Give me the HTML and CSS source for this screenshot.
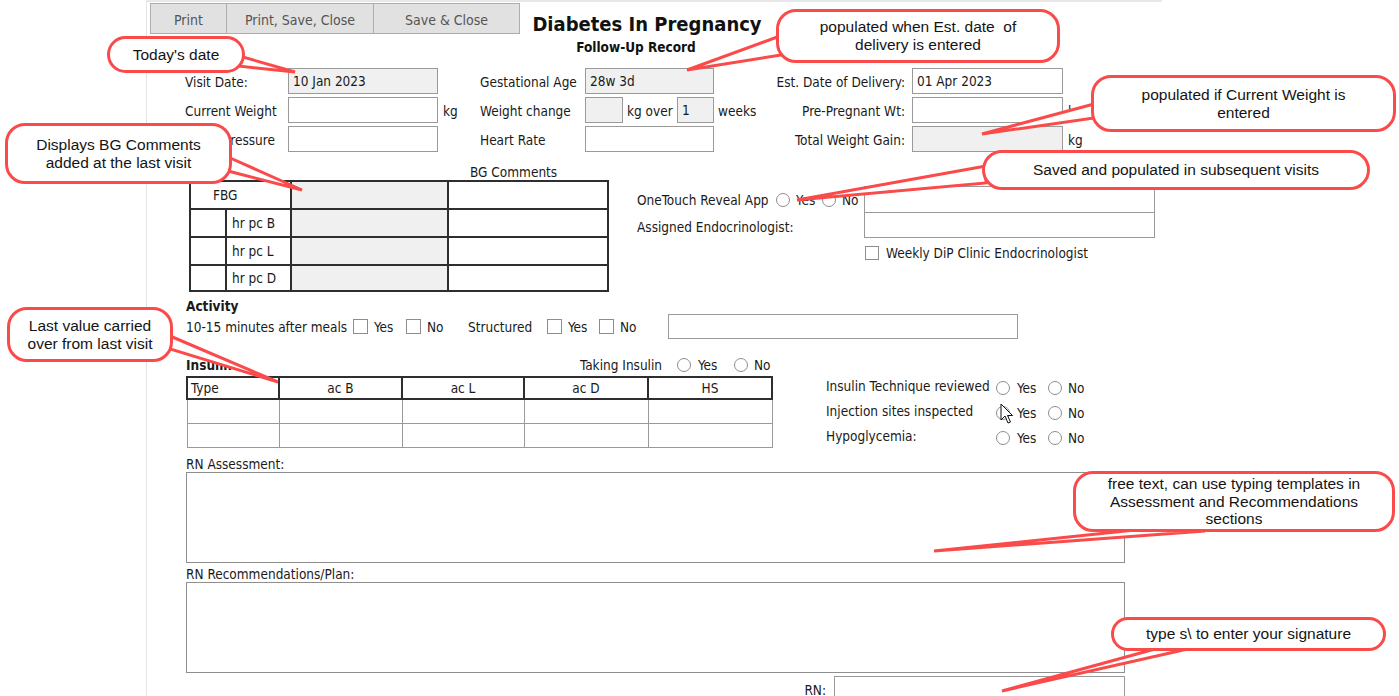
FILE: index.html
```html
<!DOCTYPE html>
<html>
<head>
<meta charset="utf-8">
<title>Diabetes In Pregnancy</title>
<link rel="stylesheet" href="styles.css">
</head>
<body>
<div class="page">
  <div class="gutter"></div>
  <div class="panel">
    <div class="toolbar">
      <div class="buttons">
        <button class="btn b1">Print</button>
        <button class="btn b2">Print, Save, Close</button>
        <button class="btn b3">Save &amp; Close</button>
      </div>
      <div class="title">
        <h1>Diabetes In Pregnancy</h1>
        <h2>Follow-Up Record</h2>
      </div>
    </div>

    <div class="fields">
      <span class="lbl">Visit Date:</span>
      <div class="tb gray">10 Jan 2023</div>
      <span></span>
      <span class="lbl">Gestational Age</span>
      <div class="c5"><div class="tb gray w129">28w 3d</div></div>
      <span class="lbl right">Est. Date of Delivery:</span>
      <div class="tb">01 Apr 2023</div>
      <span></span>

      <span class="lbl">Current Weight</span>
      <div class="tb"></div>
      <span class="unit">kg</span>
      <span class="lbl">Weight change</span>
      <div class="c5 wc">
        <div class="tb gray w38"></div>
        <span class="unit kgo">kg over</span>
        <div class="tb gray w37">1</div>
        <span class="unit">weeks</span>
      </div>
      <span class="lbl right">Pre-Pregnant Wt:</span>
      <div class="tb"></div>
      <span class="unit">kg</span>

      <span class="lbl">Blood Pressure</span>
      <div class="tb"></div>
      <span></span>
      <span class="lbl">Heart Rate</span>
      <div class="c5"><div class="tb w129"></div></div>
      <span class="lbl right">Total Weight Gain:</span>
      <div class="tb gray"></div>
      <span class="unit">kg</span>
    </div>

    <div class="mid">
      <div class="bg">
        <div class="bg-label">BG Comments</div>
        <table class="bgt">
          <colgroup><col class="k1"><col class="k2"><col class="k3"><col class="k4"></colgroup>
          <tr><td colspan="2" class="fbg">FBG</td><td class="gray"></td><td></td></tr>
          <tr><td></td><td class="pc">hr pc B</td><td class="gray"></td><td></td></tr>
          <tr><td></td><td class="pc">hr pc L</td><td class="gray"></td><td></td></tr>
          <tr class="last"><td></td><td class="pc">hr pc D</td><td class="gray"></td><td></td></tr>
        </table>
      </div>
      <div class="endo">
        <div class="endo-row r1">
          <span class="ot-label">OneTouch Reveal App</span>
          <span class="radio"></span><span class="opt yes">Yes</span>
          <span class="radio"></span><span class="opt">No</span>
        </div>
        <div class="tb endo-tb1"></div>
        <div class="endo-row r2"><span>Assigned Endocrinologist:</span></div>
        <div class="tb endo-tb2"></div>
        <div class="weekly"><span class="check"></span><span>Weekly DiP Clinic Endocrinologist</span></div>
      </div>
    </div>

    <div class="activity">
      <div class="section">Activity</div>
      <div class="act-row">
        <span class="a1">10-15 minutes after meals</span>
        <span class="check"></span><span class="a2">Yes</span>
        <span class="check"></span><span class="a3">No</span>
        <span class="a4">Structured</span>
        <span class="check"></span><span class="a5">Yes</span>
        <span class="check"></span><span class="a6">No</span>
        <div class="tb act-tb"></div>
      </div>
    </div>

    <div class="ins-head">
      <span class="section">Insulin</span>
      <span class="taking">Taking Insulin</span>
      <span class="radio"></span><span class="t-yes">Yes</span>
      <span class="radio"></span><span class="t-no">No</span>
    </div>
    <div class="ins-body">
      <table class="ins">
        <colgroup><col class="i1"><col class="i2"><col class="i3"><col class="i4"><col class="i5"></colgroup>
        <tr class="head"><td class="type">Type</td><td>ac B</td><td>ac L</td><td>ac D</td><td>HS</td></tr>
        <tr><td></td><td></td><td></td><td></td><td></td></tr>
        <tr><td></td><td></td><td></td><td></td><td></td></tr>
      </table>
      <div class="questions">
        <div class="q"><span class="q-l">Insulin Technique reviewed</span><span class="radio"></span><span class="q-y">Yes</span><span class="radio"></span><span class="q-n">No</span></div>
        <div class="q"><span class="q-l">Injection sites inspected</span><span class="radio"></span><span class="q-y">Yes</span><span class="radio"></span><span class="q-n">No</span></div>
        <div class="q"><span class="q-l">Hypoglycemia:</span><span class="radio"></span><span class="q-y">Yes</span><span class="radio"></span><span class="q-n">No</span></div>
      </div>
    </div>

    <div class="notes">
      <div class="note-label">RN Assessment:</div>
      <div class="area"></div>
      <div class="note-label second">RN Recommendations/Plan:</div>
      <div class="area"></div>
      <div class="rn-row"><span class="rn">RN:</span><div class="tb rn-tb"></div></div>
      <div class="section nutrition">Nutrition</div>
    </div>
  </div>
</div>

<div class="annot">
  <svg class="tails" width="1399" height="696" viewBox="0 0 1399 696">
    <g fill="#fff" stroke="#fb4a4a" stroke-width="3" stroke-linejoin="miter">
      <polygon points="236,55 295,72 238,66"/>
      <polygon points="780,36 687,70 800,52"/>
      <polygon points="1094,104 982,134 1094,118"/>
      <polygon points="986,166 797,200 986,183"/>
      <polygon points="228,157 302,190 228,171"/>
      <polygon points="170,336 278,382 170,349"/>
      <polygon points="1135,530 934,551 1205,531"/>
      <polygon points="1166,646 1002,691 1201,646"/>
    </g>
  </svg>
  <div class="callout c-today">Today's date</div>
  <div class="callout c-edd">populated when Est. date&nbsp; of<br>delivery is entered</div>
  <div class="callout c-wt">populated if Current Weight is<br>entered</div>
  <div class="callout c-saved">Saved and populated in subsequent visits</div>
  <div class="callout c-bg">Displays BG Comments<br>added at the last visit</div>
  <div class="callout c-last">Last value carried<br>over from last visit</div>
  <div class="callout c-free">free text, can use typing templates in<br>Assessment and Recommendations<br>sections</div>
  <div class="callout c-sig">type s\ to enter your signature</div>
  <svg class="cursor" width="14" height="22" viewBox="0 0 14 22">
    <path d="M1 1 L1 17 L5 13 L8 20 L10.5 19 L7.5 12.5 L12.5 12.5 Z" fill="#fff" stroke="#111" stroke-width="1" stroke-linejoin="round"/>
  </svg>
</div>
</body>
</html>
```

FILE: styles.css
```css
* { box-sizing: border-box; }
html, body { margin: 0; padding: 0; background: #fff; }
body {
  font-family: "DejaVu Sans Condensed", "DejaVu Sans", "Liberation Sans", sans-serif;
  font-size: 13.5px;
  color: #1a1a1a;
  width: 1399px;
  height: 696px;
  overflow: hidden;
  position: relative;
}
.page { display: flex; height: 696px; }
.gutter { width: 146px; flex: none; }
.panel {
  width: 1016px;
  flex: none;
  height: 696px;
  overflow: hidden;
  border-left: 1px solid #e4e4e4;
  border-top: 2px solid #e8e8e8;
}

/* toolbar */
.toolbar { display: flex; align-items: flex-start; height: 66px; }
.buttons { display: flex; margin: 1px 0 0 3px; }
.btn {
  height: 31px;
  margin: 0 -1px 0 0;
  padding: 2px 0 0;
  background: #e1e1e1;
  border: 1px solid #adadad;
  font-family: inherit;
  font-size: 14px;
  color: #555;
}
.b1 { width: 77px; }
.b2 { width: 148px; }
.b3 { width: 147px; }
.title { margin: 10px 0 0 12px; width: 232px; text-align: center; }
.title h1 {
  margin: 0;
  font-size: 20px;
  line-height: 24px;
  font-weight: bold;
  white-space: nowrap;
  color: #111;
}
.title h2 {
  margin: 3px 0 0;
  font-size: 13.5px;
  line-height: 16px;
  font-weight: bold;
  padding-right: 22px;
  color: #111;
}

/* top fields */
.fields {
  display: grid;
  grid-template-columns: 103px 150px 42px 105px 185px 142px 151px 40px;
  grid-auto-rows: 26px;
  row-gap: 3px;
  margin-left: 38px;
  align-items: center;
}
.lbl { white-space: nowrap; padding-top: 2px; }
.lbl.right { text-align: right; padding-right: 7px; }
.unit { padding-left: 5px; padding-top: 2px; white-space: nowrap; }
.tb {
  height: 26px;
  border: 1px solid #9a9a9a;
  background: #fff;
  padding: 0 4px;
  line-height: 24px;
  white-space: nowrap;
}
.gray { background: #f0f0f0; }
.c5 { display: flex; align-items: center; height: 26px; }
.w129 { width: 129px; }
.w38 { width: 38px; }
.w37 { width: 37px; }
.wc .unit { padding-left: 4px; }
.wc .kgo { width: 54px; }

/* BG */
.mid { display: flex; margin-top: 12px; }
.bg { margin-left: 42px; width: 418px; }
.bg-label { height: 16px; line-height: 16px; padding-left: 281px; }
.bgt { border-collapse: collapse; table-layout: fixed; width: 418px; }
.bgt td { border: 2px solid #2e2e2e; height: 28px; padding: 0; }
.bgt tr.last td { height: 26px; }
.bgt .k1 { width: 36px; }
.bgt .k2 { width: 65px; }
.bgt .k3 { width: 157px; }
.bgt .k4 { width: 160px; }
.bgt .fbg { padding-left: 22px; }
.bgt .pc { padding-left: 5px; }

.endo {
  margin: 22px 0 0 30px;
  display: grid;
  grid-template-columns: 227px 291px;
  grid-template-rows: 27px 25px 22px;
}
.endo-row { display: flex; align-items: center; }
.ot-label { width: 139px; white-space: nowrap; }
.radio {
  display: inline-block;
  width: 14px;
  height: 14px;
  border: 1px solid #8d8d8d;
  border-radius: 50%;
  background: #fff;
  flex: none;
}
.check {
  display: inline-block;
  width: 15px;
  height: 15px;
  border: 1px solid #8d8d8d;
  background: #fff;
  flex: none;
}
.opt { margin-left: 6px; }
.opt.yes { width: 26px; }
.endo-tb1 { height: 28px; }
.endo-tb2 { height: 26px; margin-top: -1px; }
.r2 { padding-top: 2px; white-space: nowrap; }
.weekly {
  grid-column: 2;
  grid-row: 3;
  display: flex;
  align-items: center;
  gap: 7px;
  margin: 8px 0 0 1px;
  height: 14px;
  white-space: nowrap;
}
.weekly .check { width: 14px; height: 14px; }

/* activity */
.activity { margin-top: 6px; margin-left: 39px; }
.section { font-weight: bold; height: 16px; line-height: 16px; }
.act-row { display: flex; align-items: center; margin-top: 0; height: 25px; }
.act-row span { white-space: nowrap; }
.a1 { width: 167px; }
.act-row .check + span { margin-left: 6px; }
.a2 { width: 32px; }
.a3 { width: 41px; }
.a4 { width: 79px; }
.a5 { width: 31px; }
.a6 { width: 48px; }
.act-tb { width: 350px; height: 25px; }

/* insulin */
.ins-head { display: flex; align-items: center; margin: 18px 0 0 39px; height: 16px; }
.ins-head .section { width: 394px; }
.taking { width: 97px; white-space: nowrap; }
.t-yes { margin-left: 7px; width: 36px; }
.t-no { margin-left: 6px; }
.ins-body { display: flex; margin-top: 3px; }
.ins { border-collapse: collapse; table-layout: fixed; width: 585px; margin-left: 39px; }
.ins .i1 { width: 92px; }
.ins .i2 { width: 123px; }
.ins .i3 { width: 122px; }
.ins .i4 { width: 124px; }
.ins .i5 { width: 124px; }
.ins td { border: 1px solid #9a9a9a; height: 24px; padding: 0; text-align: center; }
.ins tr.head td { border: 2px solid #2e2e2e; height: 22px; }
.ins td.type { text-align: left; padding-left: 3px; }
.questions { margin: -3px 0 0 53px; }
.q { display: flex; align-items: center; height: 25px; }
.q-l { width: 170px; white-space: nowrap; }
.q .radio { position: relative; top: 2px; }
.q-y { margin-left: 7px; width: 31px; position: relative; top: 2px; }
.q-n { margin-left: 6px; position: relative; top: 2px; }

/* notes */
.notes { margin-left: 39px; margin-top: 8px; width: 939px; }
.note-label { height: 16px; line-height: 16px; }
.note-label.second { margin-top: 3px; }
.area { height: 91px; border: 1px solid #8e8e8e; background: #fff; }
.rn-row { display: flex; align-items: center; justify-content: flex-end; margin-top: 3px; height: 26px; }
.rn { margin-right: 8px; margin-top: 2px; }
.rn-tb { width: 291px; height: 26px; }
.nutrition { margin-top: -8px; }

/* annotations overlay */
.annot { position: absolute; left: 0; top: 0; width: 1399px; height: 696px; pointer-events: none; }
.tails { position: absolute; left: 0; top: 0; }
.callout {
  position: absolute;
  background: #fff;
  border: 3px solid #fb4a4a;
  border-radius: 20px;
  font-family: "Liberation Sans", Arial, sans-serif;
  font-size: 15.5px;
  line-height: 18px;
  color: #141414;
  text-align: center;
  display: flex;
  align-items: center;
  justify-content: center;
  white-space: nowrap;
}
.c-today { left: 107px; top: 36px; width: 138px; height: 37px; }
.c-edd { left: 776px; top: 9px; width: 284px; height: 54px; }
.c-wt { left: 1091px; top: 75px; width: 305px; height: 57px; }
.c-saved { left: 982px; top: 150px; width: 388px; height: 40px; }
.c-bg { left: 5px; top: 123px; width: 227px; height: 61px; }
.c-last { left: 7px; top: 307px; width: 166px; height: 55px; }
.c-free { left: 1073px; top: 471px; width: 322px; height: 61px; line-height: 17.5px; }
.c-sig { left: 1111px; top: 617px; width: 275px; height: 34px; }
.cursor { position: absolute; left: 1000px; top: 403px; }
```
